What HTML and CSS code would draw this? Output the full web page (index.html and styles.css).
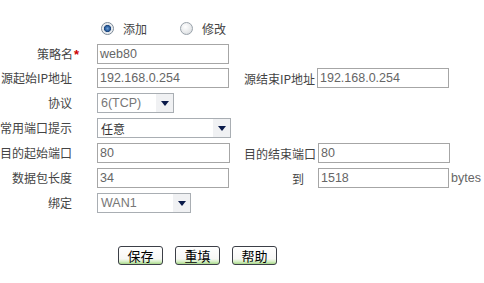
FILE: index.html
```html
<!DOCTYPE html>
<html>
<head>
<meta charset="utf-8">
<link rel="stylesheet" href="styles.css">
</head>
<body>
<div class="form">
  <div class="radios">
    <span class="radio checked"></span><span class="rtext">添加</span>
    <span class="radio second"></span><span class="rtext">修改</span>
  </div>

  <div class="row first">
    <div class="label star-label">策略名<span class="star">*</span></div>
    <div class="input w132">web80</div>
  </div>

  <div class="row">
    <div class="label">源起始IP地址</div>
    <div class="input w132">192.168.0.254</div>
    <div class="rlabel">源结束IP地址</div>
    <div class="input w132">192.168.0.254</div>
  </div>

  <div class="row">
    <div class="label">协议</div>
    <div class="select w77"><span class="stext">6(TCP)</span><span class="arrow"><svg width="8" height="5" viewBox="0 0 8 5"><path d="M0 0H8L4 5Z" fill="#0a1a4a"/></svg></span></div>
  </div>

  <div class="row">
    <div class="label">常用端口提示</div>
    <div class="select w134"><span class="stext dark">任意</span><span class="arrow"><svg width="8" height="5" viewBox="0 0 8 5"><path d="M0 0H8L4 5Z" fill="#0a1a4a"/></svg></span></div>
  </div>

  <div class="row">
    <div class="label">目的起始端口</div>
    <div class="input w133">80</div>
    <div class="rlabel">目的结束端口</div>
    <div class="input w132">80</div>
  </div>

  <div class="row">
    <div class="label">数据包长度</div>
    <div class="input w132">34</div>
    <div class="rlabel to">到</div>
    <div class="input w131">1518</div>
    <div class="unit">bytes</div>
  </div>

  <div class="row">
    <div class="label">绑定</div>
    <div class="select w94"><span class="stext">WAN1</span><span class="arrow"><svg width="8" height="5" viewBox="0 0 8 5"><path d="M0 0H8L4 5Z" fill="#0a1a4a"/></svg></span></div>
  </div>

  <div class="buttons">
    <button class="btn">保存</button>
    <button class="btn">重填</button>
    <button class="btn">帮助</button>
  </div>
</div>
</body>
</html>
```

FILE: styles.css
```css
html, body {
  margin: 0;
  padding: 0;
  background: #fff;
}
body {
  font-family: "Liberation Sans", "Noto Sans CJK SC", sans-serif;
  font-size: 12px;
  color: #444;
}
.form {
  display: flex;
  flex-direction: column;
  padding-top: 19px;
}
.radios {
  display: flex;
  align-items: center;
  height: 18px;
  padding-left: 101px;
  margin-bottom: 7px;
  font-family: "Noto Sans CJK SC", sans-serif;
  font-size: 12px;
  color: #444;
}
.radio {
  width: 11px;
  height: 11px;
  border-radius: 50%;
  border: 1px solid #9aa3ab;
  background: radial-gradient(circle at 40% 35%, #ffffff 0%, #e6e8ea 60%, #c9cdd1 100%);
  box-sizing: content-box;
}
.radio.checked {
  border-color: #7c8a97;
  background: radial-gradient(circle at 50% 50%, #6fa0d8 0%, #2b5f9e 30%, #1c4479 42%, #dfe4ea 50%, #f4f5f6 75%, #c6ccd2 100%);
}
.radio.second {
  margin-left: 33px;
}
.rtext {
  margin-left: 9px;
}
.row {
  display: flex;
  align-items: center;
  height: 20px;
  margin-bottom: 5px;
}
.row.first {
  margin-bottom: 4px;
}
.label {
  width: 72px;
  margin-right: 24px;
  text-align: right;
  white-space: nowrap;
  font-family: "Noto Sans CJK SC", sans-serif;
  font-size: 12px;
  line-height: 20px;
  color: #444;
}
.star-label {
  width: 79px;
  margin-right: 17px;
}
.star {
  color: #c00;
  font-family: "Liberation Sans", sans-serif;
  font-size: 13px;
  font-weight: bold;
  margin-left: 1px;
}
.rlabel {
  width: 86px;
  margin-right: 1px;
  text-align: right;
  white-space: nowrap;
  font-family: "Noto Sans CJK SC", sans-serif;
  font-size: 12px;
  color: #444;
}
.rlabel.to {
  width: 75px;
  margin-right: 13px;
}
.input {
  box-sizing: border-box;
  height: 20px;
  border: 1px solid #a6a6a6;
  background: #fff;
  padding-left: 2px;
  line-height: 18px;
  color: #666;
  font-family: "Liberation Sans", "Noto Sans CJK SC", sans-serif;
  font-size: 12.5px;
  margin-left: 1px;
}
.w131 { width: 131px; }
.w132 { width: 132px; }
.w133 { width: 133px; }
.unit {
  margin-left: 2px;
  color: #666;
  font-size: 12.5px;
}
.select {
  box-sizing: border-box;
  height: 20px;
  border: 1px solid #a9aeb3;
  background: #fff;
  display: flex;
  align-items: center;
  justify-content: space-between;
  margin-left: 1px;
}
.w77 { width: 77px; }
.w134 { width: 134px; }
.w94 { width: 94px; }
.stext {
  padding-left: 3px;
  color: #777;
  font-family: "Liberation Sans", "Noto Sans CJK SC", sans-serif;
  font-size: 12.5px;
}
.stext.dark {
  color: #333;
  font-family: "Noto Sans CJK SC", sans-serif;
  font-size: 12px;
}
.arrow {
  width: 17px;
  height: 18px;
  background: #f0f1f3;
  display: flex;
  align-items: center;
  justify-content: center;
}
.buttons {
  display: flex;
  padding-left: 118px;
  gap: 12px;
  margin-top: 28px;
}
.btn {
  box-sizing: border-box;
  width: 45px;
  height: 19px;
  padding: 0;
  border: 1px solid #3c3f47;
  border-radius: 3px;
  background: linear-gradient(#ffffff 0%, #f7f7f5 70%, #d7efc6 85%, #a9d98a 100%);
  font-family: "Noto Sans CJK SC", sans-serif;
  font-size: 13px;
  line-height: 16px;
  color: #000;
}
```
